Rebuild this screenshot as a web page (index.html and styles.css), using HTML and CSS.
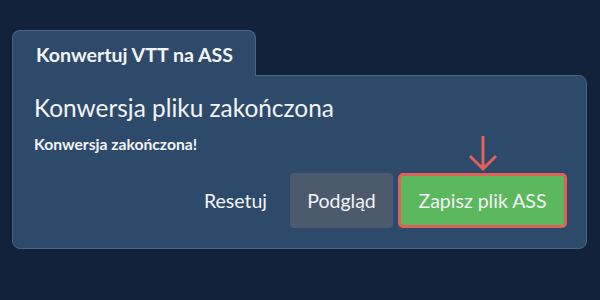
FILE: index.html
```html
<!DOCTYPE html>
<html lang="pl">
<head>
  <meta charset="UTF-8" />
  <meta name="viewport" content="width=device-width, initial-scale=1.0" />
  <title>Konwertuj VTT na ASS</title>
  <link rel="stylesheet" href="styles.css">
</head>
<body>
  <div class="card">
    <div class="tab">Konwertuj VTT na ASS</div>
    <div class="panel">
      <h2>Konwersja pliku zakończona</h2>
      <p class="status">Konwersja zakończona!</p>
      <div class="actions">
        <button class="button reset-button">Resetuj</button>
        <button class="button preview-button">Podgląd</button>
        <div class="save-wrap">
          <svg class="arrow" width="34" height="38" viewBox="0 0 34 38">
            <path d="M17 2 V35 M4 22 L17 35 L30 22" fill="none" stroke="#e0605a" stroke-width="3" />
          </svg>
          <button class="button save-button">Zapisz plik ASS</button>
        </div>
      </div>
    </div>
  </div>
</body>
</html>
```

FILE: styles.css
```css
body {
  font-family: Lato, "Open Sans", sans-serif;
  background-color: #11223a;
  margin: 0;
  padding: 30px 13px 0 12px;
  color: #f2f4f7;
}

.card {
  display: flex;
  flex-direction: column;
  align-items: flex-start;
}

.tab {
  position: relative;
  z-index: 1;
  width: 219px;
  height: 45px;
  padding-left: 23px;
  margin-bottom: -1px;
  background-color: #2e4a6b;
  border: 1px solid #4a6486;
  border-bottom: none;
  border-radius: 8px 8px 0 0;
  font-size: 19.6px;
  font-weight: bold;
  line-height: 48px;
}

.panel {
  align-self: stretch;
  padding: 17px 19px 20px 21px;
  background-color: #2e4a6b;
  border: 1px solid #4a6486;
  border-radius: 0 8px 8px 8px;
}

h2 {
  margin: 0;
  font-size: 24.4px;
  font-weight: normal;
  line-height: 30px;
}

.status {
  margin: 12px 0 0;
  font-size: 15.7px;
  font-weight: bold;
  line-height: 19px;
}

.actions {
  display: flex;
  justify-content: flex-end;
  align-items: flex-end;
  margin-top: -20px;
}

.button {
  font-family: inherit;
  font-size: 19.5px;
  color: #f2f4f7;
  border: none;
  border-radius: 4px;
  cursor: pointer;
  height: 55px;
}

.reset-button {
  background: none;
  padding: 0 23px 0 0;
}

.preview-button {
  width: 103px;
  background-color: #4b5b6d;
}

.save-wrap {
  display: flex;
  flex-direction: column;
  align-items: center;
  margin-left: 5px;
}

.arrow {
  display: block;
  margin-bottom: 1px;
}

.save-button {
  width: 169px;
  background-color: #5cb85c;
  border: 3px solid #e0605a;
  border-radius: 5px;
}
```
